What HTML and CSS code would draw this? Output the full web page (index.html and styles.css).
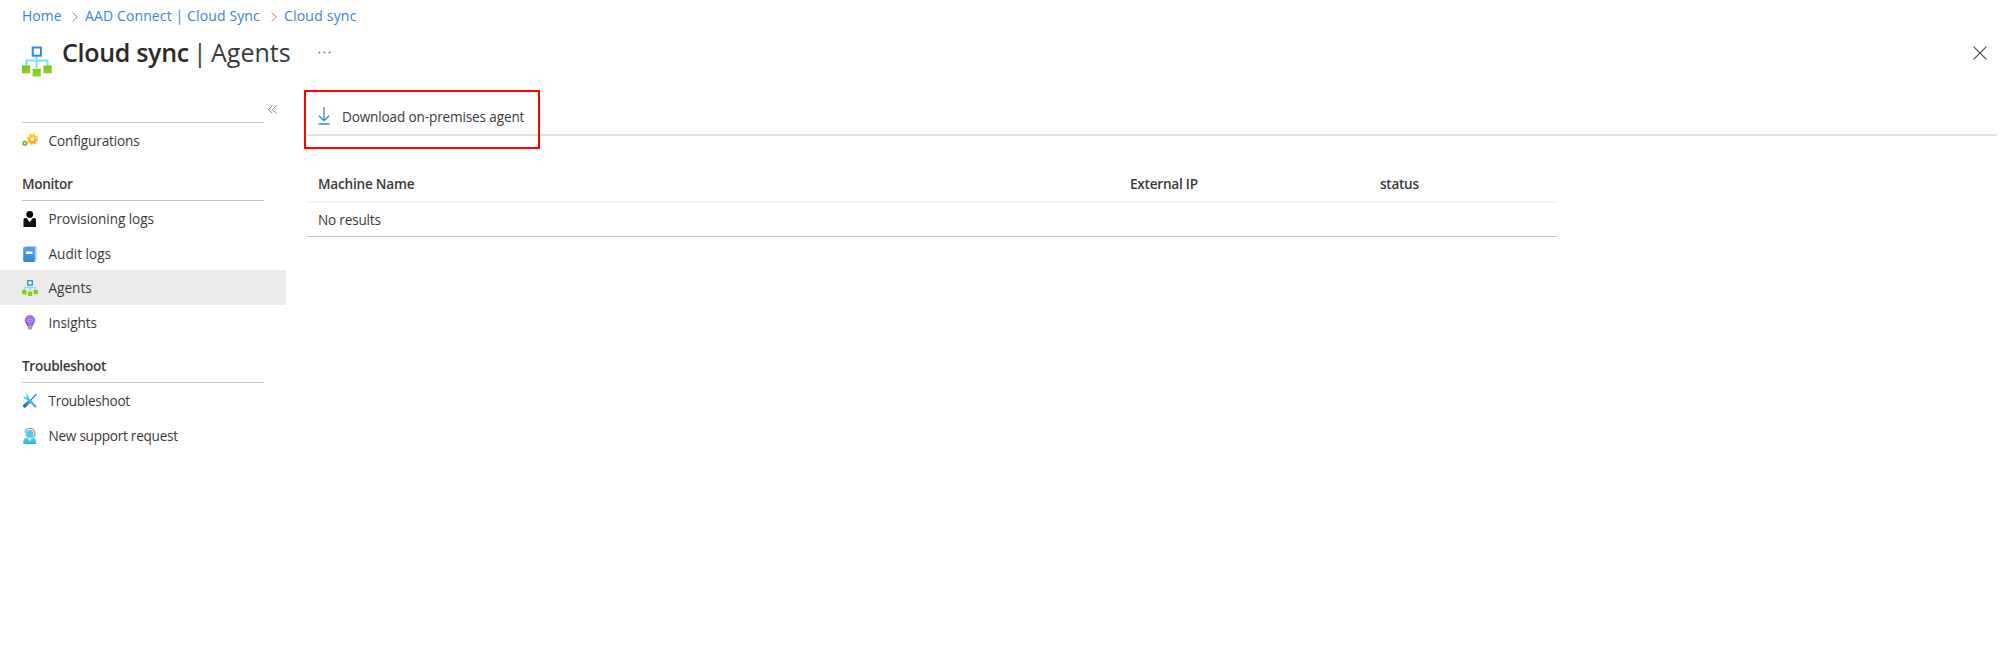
FILE: index.html
```html
<!DOCTYPE html>
<html lang="en">
<head>
<meta charset="utf-8">
<title>Cloud sync | Agents</title>
<link rel="stylesheet" href="styles.css">
</head>
<body>
<svg class="defs" width="0" height="0">
  <defs>
    <linearGradient id="green" x1="0" y1="0" x2="0" y2="1"><stop offset="0" stop-color="#7cc41f"/><stop offset="1" stop-color="#8ed61f"/></linearGradient>
    <linearGradient id="gold" x1="0" y1="0" x2="0" y2="1"><stop offset="0" stop-color="#ffd400"/><stop offset="1" stop-color="#fea11b"/></linearGradient>
    <linearGradient id="blue" x1="0" y1="0" x2="0" y2="1"><stop offset="0" stop-color="#5ea0ef"/><stop offset="1" stop-color="#2f86dd"/></linearGradient>
    <linearGradient id="purple" x1="0" y1="0" x2="0" y2="1"><stop offset="0" stop-color="#a67af4"/><stop offset="1" stop-color="#7447dc"/></linearGradient>
    <linearGradient id="cyan" x1="0" y1="0" x2="0" y2="1"><stop offset="0" stop-color="#5ad8f6"/><stop offset="1" stop-color="#32a9dc"/></linearGradient>
    <linearGradient id="steel" x1="1" y1="0" x2="0" y2="1"><stop offset="0" stop-color="#41a8dc"/><stop offset="1" stop-color="#1763b0"/></linearGradient>
  </defs>
</svg>

<header class="header">
  <nav class="crumbs">
    <a class="crumb-home">Home</a>
    <svg class="chevron" viewBox="0 0 6 10"><path d="M.7.500 5.200 5 .7 9.500"/></svg>
    <a class="crumb-connect">AAD Connect | Cloud Sync</a>
    <svg class="chevron" viewBox="0 0 6 10"><path d="M.7.500 5.200 5 .7 9.500"/></svg>
    <a class="crumb-sync">Cloud sync</a>
  </nav>
  <div class="title-row">
    <svg class="title-icon" viewBox="0 0 30 31">
      <path d="M14.500 10v12M4.500 20v-5.500h21V20" fill="none" stroke="#6fe5fb" stroke-width="2"/>
      <rect x="10.700" y="1.500" width="8.200" height="8.200" fill="#fff" stroke="#3a82dc" stroke-width="2"/>
      <path d="M0 19.500h8.200v7.700H0zM10.600 22.800h8.200v7.700h-8.200zM21.500 19.500h8.200v7.700h-8.200z" fill="url(#green)"/>
    </svg>
    <h1 class="title"><b>Cloud sync</b><span class="bar">|</span><span class="title-sub">Agents</span></h1>
    <svg class="more" viewBox="0 0 13 3"><path d="M.5.800h1.700v1.500H.5zM5.600.800h1.700v1.500H5.600zM10.700.800h1.700v1.500h-1.700z"/></svg>
    <svg class="close" viewBox="0 0 14 14"><path d="M.6.600l12.800 12.800M13.400.600.6 13.400"/></svg>
  </div>
</header>

<div class="body">
  <aside class="sidebar">
    <div class="search-row">
      <div class="search-line"></div>
      <svg class="collapse" viewBox="0 0 9 9"><path d="M4.300.500.700 4.500l3.600 4M8.300.500 4.700 4.500l3.600 4"/></svg>
    </div>
    <a class="item first">
      <svg class="icon" viewBox="0 0 16 16">
        <circle cx="10.500" cy="6.300" r="3.200" fill="none" stroke="url(#gold)" stroke-width="2.500"/>
        <circle cx="10.500" cy="6.300" r="4.900" fill="none" stroke="#fdb913" stroke-width="1.500" stroke-dasharray="1.920 1.928"/>
        <circle cx="2.900" cy="10.200" r="1.750" fill="none" stroke="#6cb92c" stroke-width="1.500"/>
        <circle cx="2.900" cy="10.200" r="2.600" fill="none" stroke="#6cb92c" stroke-width=".6" stroke-dasharray="1.020 1.020"/>
      </svg><span class="t-config">Configurations</span></a>
    <h2 class="group t-monitor">Monitor</h2>
    <a class="item">
      <svg class="icon" viewBox="0 0 16 16"><circle cx="7.700" cy="3.400" r="3.400" fill="#000"/><path d="M1.500 8.500Q1.500 7 3 7h1.500l3.200 4.300L10.900 7h1.500q1.600 0 1.600 1.500V16H1.500z" fill="#111"/></svg><span class="t-prov">Provisioning logs</span></a>
    <a class="item">
      <svg class="icon" viewBox="0 0 16 16"><path d="M3.500 0H14q.6 0 .6.600V14q0 .7-.7.700H3z" fill="#a9cbef"/><path d="M2.300.900H12q.8 0 .8.700V16H2.500q-1.300 0-1.300-1.300V2q0-1.100 1.100-1.100z" fill="url(#blue)"/><rect x="4" y="5.400" width="6.500" height="2.500" rx=".3" fill="#fff"/></svg><span class="t-audit">Audit logs</span></a>
    <a class="item selected">
      <svg class="icon" viewBox="0 0 16 16">
        <path d="M8 5v7M2.500 10.500V7.700h11v2.800" fill="none" stroke="#7fe3f6" stroke-width="1.200"/>
        <rect x="5.800" y=".7" width="4.400" height="4.400" fill="#fff" stroke="#3a82dc" stroke-width="1.300"/>
        <path d="M.2 10h4.300v4.200H.200zM5.900 11.800h4.300V16H5.900zM11.600 10h4.300v4.200h-4.300z" fill="url(#green)"/>
      </svg><span class="t-agents">Agents</span></a>
    <a class="item">
      <svg class="icon" viewBox="0 0 16 16"><path d="M7.900 0a5.200 5.200 0 0 0-5.200 5.200c0 2.600 2.300 3.800 2.800 6.300h4.800c.5-2.500 2.800-3.700 2.800-6.300A5.200 5.200 0 0 0 7.900 0z" fill="url(#purple)"/><path d="M7 11V5.800M8.900 11V5.800M7 5.800a1.200 1.200 0 1 1-1.200-1.200h4.300a1.200 1.200 0 1 1-1.200 1.200" fill="none" stroke="#cfb9fa" stroke-width=".7"/><path d="M5.700 12h4.500v1.300l-1.200 1.400H6.900l-1.200-1.400z" fill="#a2a2a8"/></svg><span class="t-insights">Insights</span></a>
    <h2 class="group tall t-trouble-head">Troubleshoot</h2>
    <a class="item">
      <svg class="icon" viewBox="0 0 16 16"><path d="M14.500 1 7.800 8.200" stroke="#3d91bf" stroke-width="1.300"/><path d="M7.700 8.300 2.600 13" stroke="url(#steel)" stroke-width="3.200" stroke-linecap="round"/><path d="M4.800 4.800 13.300 13.400" stroke="#42b3df" stroke-width="2.300" stroke-linecap="round"/><path d="M3 .800a3.500 3.500 0 0 1 3.600 5 3.400 3.400 0 0 1-5.300-3.200l2 1.900 1.600-.4.200-1.500z" fill="#54cff0"/></svg><span class="t-trouble">Troubleshoot</span></a>
    <a class="item">
      <svg class="icon" viewBox="0 0 16 16"><path d="M3 4.500Q3.200.500 7.800.500t5 4.500v2.200q0 1.500-2.500 1.700" fill="none" stroke="#9b9b9b" stroke-width="1.200"/><path d="M1.300 16v-2.700q.2-3.200 3.400-3.800h6q3.200.6 3.400 3.800V16z" fill="url(#cyan)"/><circle cx="7.600" cy="5.800" r="3.900" fill="#50c9e9"/><path d="M5.800 10h4l-2 3.500z" fill="#d8f6ff"/></svg><span class="t-support">New support request</span></a>
  </aside>

  <main class="main">
    <div class="toolbar">
      <a class="download">
        <svg class="down-icon" viewBox="0 0 12 18"><path d="M6 0v13.600M.9 8.800 6 13.700l5.100-4.900M.5 17h11"/></svg>
        <span class="t-download">Download on-premises agent</span>
      </a>
      <div class="highlight"></div>
    </div>
    <div class="table">
      <div class="row head"><span class="t-machine">Machine Name</span><span class="t-ip">External IP</span><span class="t-status">status</span></div>
      <div class="row result"><span class="t-none">No results</span></div>
    </div>
  </main>
</div>
</body>
</html>
```
FILE: styles.css
```css
* { box-sizing: border-box; }
body { margin: 0; background: #fff; color: #3b3a39; font: 13.6px/20px "Open Sans", "Noto Sans", sans-serif; height: 645px; overflow: hidden; }
.defs { position: absolute; }
svg { display: block; flex: none; }
h1, h2 { margin: 0; }
span, a, b { white-space: nowrap; }

.header { height: 90px; padding: 6px 12px 0 22px; }
.crumbs { display: flex; align-items: center; height: 20px; color: #3b85d9; font-size: 14px; }
.chevron { width: 6px; height: 10px; margin: 1px 7px 0 9px; fill: none; stroke: #888; }
.crumb-home { width: 41px; }
.crumb-connect { width: 177px; letter-spacing: .12px; }
.crumb-sync { letter-spacing: .2px; }
.title-row { display: flex; height: 50px; }
.title-icon { width: 30px; height: 31px; margin-top: 20px; }
.title { display: flex; margin: 8px 0 0 10px; font-size: 25px; line-height: 36px; font-weight: 400; width: 229px; }
.title b { font-weight: 600; width: 131px; letter-spacing: -.3px; color: #2b2a29; }
.bar { width: 18px; }
.more { width: 13px; height: 3px; margin: 25px 0 0 27px; fill: #666; }
.close { width: 14px; height: 14px; margin: 20px 1px 0 auto; fill: none; stroke: #444; stroke-width: 1.1; }

.body { display: flex; }
.sidebar { width: 286px; flex: none; }
.search-row { display: flex; height: 33px; padding-left: 22px; }
.search-line { width: 242px; border-bottom: 1px solid #c8c6c4; }
.collapse { width: 9px; height: 9px; margin: 15px 0 0 4px; fill: none; stroke: #777; stroke-width: .9; }
.item { display: flex; align-items: center; height: 34.5px; padding: 2px 0 0 21.5px; }
.item.first { height: 34px; margin-top: 1px; padding-top: 0; }
.item span { margin-left: 11px; }
.icon { width: 16px; height: 16px; }
.selected { background: #edebe9; }
.group { height: 43px; margin: 0 22px; padding-top: 16px; border-bottom: 1px solid #c8c6c4; font-size: 13.6px; line-height: 20px; font-weight: 600; }
.group.tall { height: 44px; padding-top: 17px; }

.t-config { letter-spacing: -.15px; }
.t-prov { letter-spacing: -.08px; }
.t-trouble { letter-spacing: -.3px; }
.t-support { letter-spacing: -.26px; }
.t-insights { letter-spacing: -.08px; }
.t-monitor { letter-spacing: -.3px; }
.t-trouble-head { letter-spacing: -.32px; }
.t-download { letter-spacing: -.15px; }
.t-machine { letter-spacing: -.22px; }
.t-ip { letter-spacing: -.24px; }
.t-status { letter-spacing: -.3px; }
.t-none { letter-spacing: -.2px; }

.main { flex: 1; padding-left: 21px; }
.toolbar { position: relative; height: 46px; margin-right: 3px; border-bottom: 2px solid #e1e1e1; }
.download { display: flex; padding: 17px 0 0 11px; }
.down-icon { width: 12px; height: 18px; fill: none; stroke: #3b85d9; stroke-width: 1.3; }
.download span { margin-left: 12px; }
.highlight { position: absolute; left: -3px; top: 0; width: 236px; height: 59px; border: 2px solid #f00; }
.table { width: 1250px; margin-top: 30px; }
.row { display: grid; grid-template-columns: 812px 250px 1fr; padding-left: 11px; align-items: center; }
.head { height: 37px; border-bottom: 2px solid #f1f1f1; font-weight: 600; }
.result { height: 34px; border-bottom: 1px solid #c8c6c4; }
```
